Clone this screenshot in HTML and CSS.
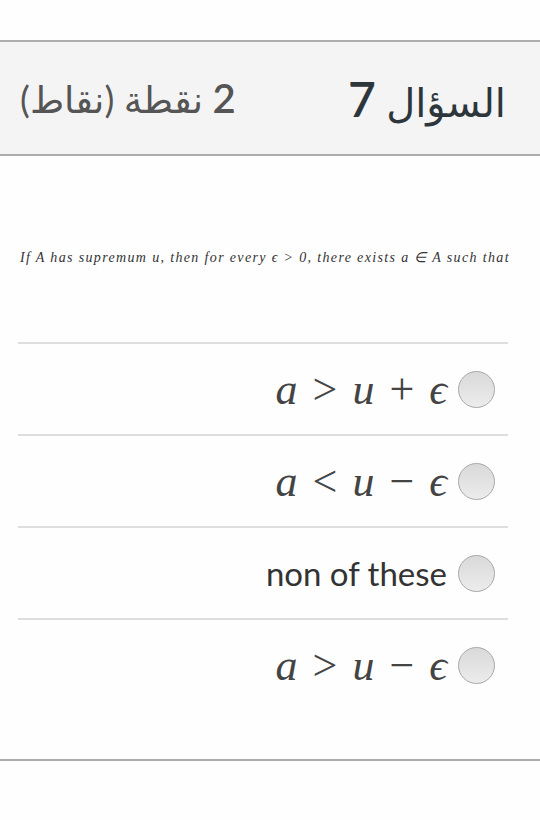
FILE: index.html
```html
<!DOCTYPE html>
<html lang="ar" dir="rtl">
<head>
<meta charset="utf-8">
<link rel="stylesheet" href="styles.css">
</head>
<body>
<div class="page">
  <div class="header">
    <div class="title">السؤال <span class="num">7</span></div>
    <div class="points"><span class="num">2</span> نقطة (نقاط)</div>
  </div>
  <div class="content">
    <p class="question" dir="ltr">If A has supremum u, then for every ϵ &gt; 0, there exists a ∈ A such that</p>
    <ul class="answers">
      <li class="answer"><span class="radio"></span><span class="math" dir="ltr">a <span class="op">&gt;</span> u <span class="op">+</span> ϵ</span></li>
      <li class="answer"><span class="radio"></span><span class="math" dir="ltr">a <span class="op">&lt;</span> u <span class="op">−</span> ϵ</span></li>
      <li class="answer"><span class="radio"></span><span class="plain" dir="ltr">non of these</span></li>
      <li class="answer"><span class="radio"></span><span class="math" dir="ltr">a <span class="op">&gt;</span> u <span class="op">−</span> ϵ</span></li>
    </ul>
  </div>
</div>
</body>
</html>
```
FILE: styles.css
```css
html, body {
  margin: 0;
  padding: 0;
  background: #fefefe;
}
.page {
  width: 540px;
  padding-top: 40px;
  font-family: Lato, "DejaVu Sans", sans-serif;
}
.header {
  display: flex;
  justify-content: space-between;
  align-items: center;
  height: 112px;
  padding: 0 34px 0 20px;
  background: #f4f4f4;
  border-top: 2px solid #adadad;
  border-bottom: 2px solid #adadad;
}
.title {
  font-size: 40px;
  color: #2d363b;
}
.title .num {
  font-size: 48px;
  font-weight: 600;
}
.points {
  font-size: 37px;
  color: #555;
}
.points .num {
  font-size: 40px;
  font-weight: 600;
}
.content {
  border-bottom: 2px solid #adadad;
  padding-bottom: 49px;
}
.question {
  margin: 0;
  padding: 93px 20px 76px 20px;
  font-family: "Liberation Serif", serif;
  font-style: italic;
  font-size: 14px;
  letter-spacing: 1.35px;
  color: #333;
  white-space: nowrap;
}
.answers {
  list-style: none;
  margin: 0 32px 0 18px;
  padding: 0;
}
.answer {
  display: flex;
  align-items: center;
  height: 90px;
  padding-right: 13px;
  border-top: 2px solid #dedede;
  gap: 11px;
}
.radio {
  width: 35px;
  height: 35px;
  border-radius: 50%;
  border: 1px solid #a8a8a8;
  background: linear-gradient(#d9d9d9, #ececec);
  flex: none;
}
.math {
  font-family: "Liberation Serif", serif;
  font-style: italic;
  font-size: 44px;
  color: #444;
}
.math .op {
  font-style: normal;
  margin: 0 4px;
}
.plain {
  font-size: 33px;
  color: #333;
}
```
